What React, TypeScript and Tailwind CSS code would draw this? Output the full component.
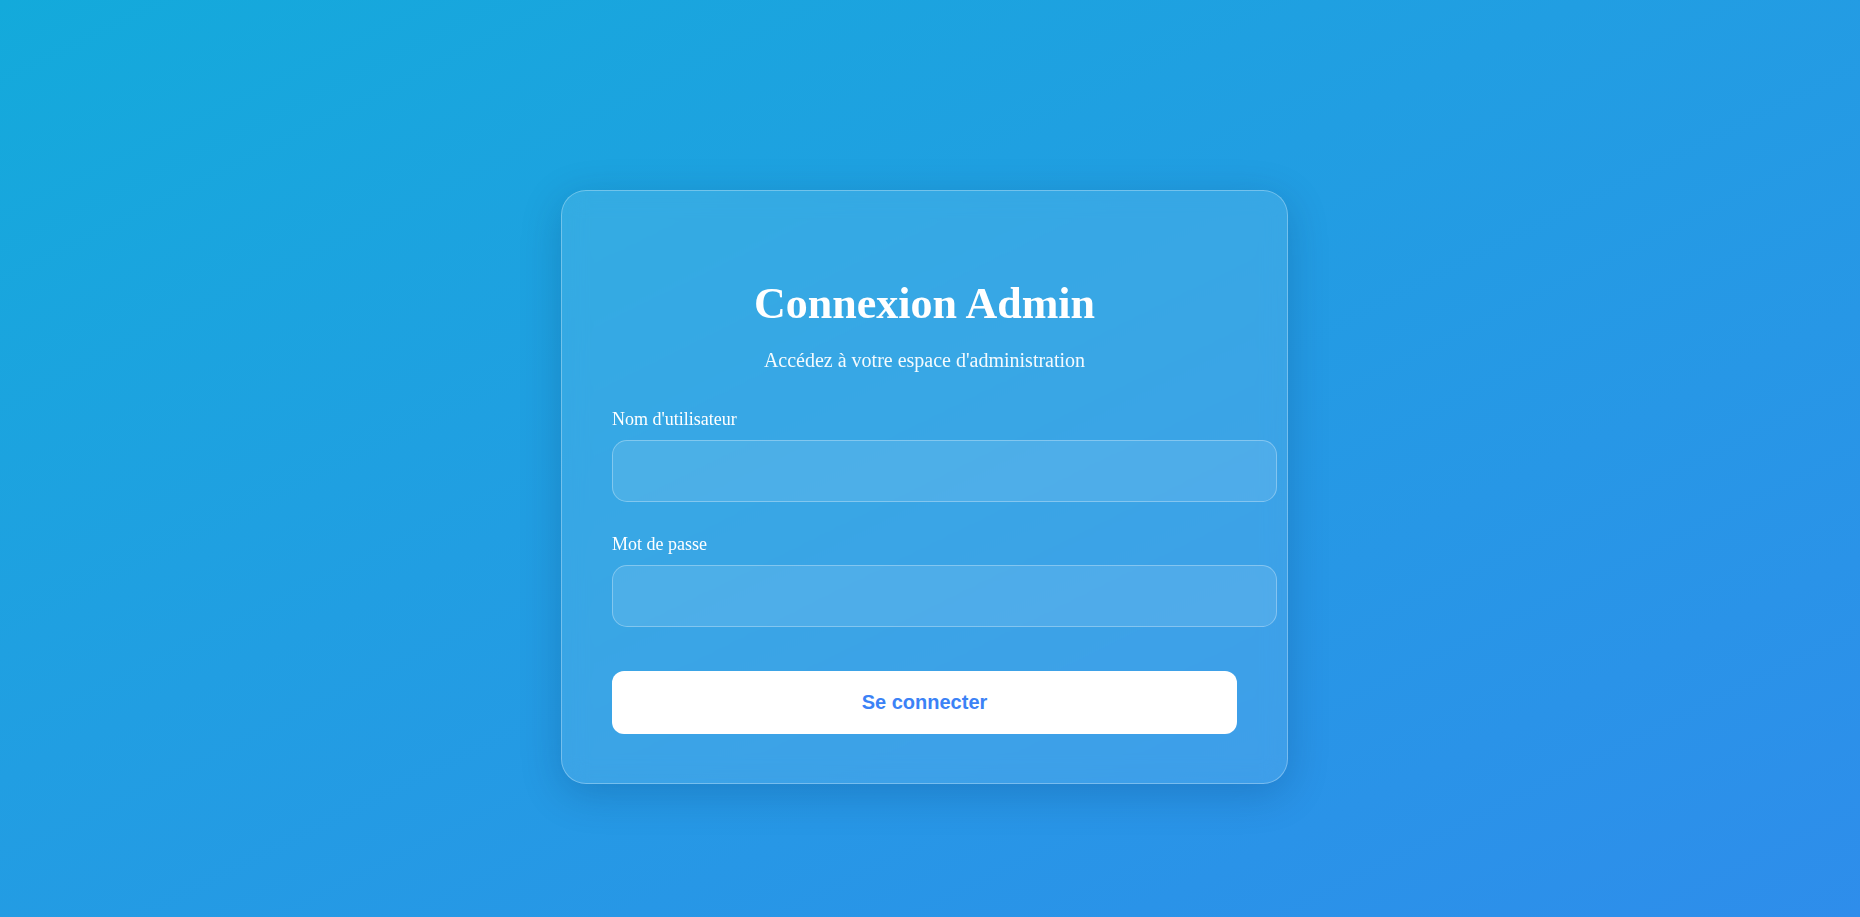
import { useState } from "react";

export default function App() {
  const [username, setUsername] = useState("");
  const [password, setPassword] = useState("");

  return (
    <div className="flex min-h-screen w-full justify-center bg-gradient-to-br from-[#13aadb] to-[#2e8deb] pt-[190px] pr-[11px] font-['Liberation_Serif',serif]">
      <div className="h-[594px] w-[727px] rounded-[25px] border border-white/30 bg-white/10 p-[50px] shadow-[0_10px_40px_rgba(0,40,90,0.22)] backdrop-blur-md">
        <div className="flex flex-col items-center pt-[36px] text-white">
          <h1 className="text-[44px] leading-[53px] font-bold">
            Connexion Admin
          </h1>
          <p className="mt-[19px] text-[20px] leading-[22px] text-white/95">
            Accédez à votre espace d'administration
          </p>
        </div>
        <form
          className="mt-[39px] flex flex-col"
          onSubmit={(e) => e.preventDefault()}
        >
          <label
            htmlFor="username"
            className="text-[18px] leading-[19px] text-white"
          >
            Nom d'utilisateur
          </label>
          <input
            id="username"
            value={username}
            onChange={(e) => setUsername(e.target.value)}
            className="mt-[11px] h-[62px] w-[665px] rounded-[15px] border border-white/30 bg-white/10 px-5 text-[17px] text-white outline-none"
          />
          <label
            htmlFor="password"
            className="mt-[33px] text-[18px] leading-[19px] text-white"
          >
            Mot de passe
          </label>
          <input
            id="password"
            type="password"
            value={password}
            onChange={(e) => setPassword(e.target.value)}
            className="mt-[11px] h-[62px] w-[665px] rounded-[15px] border border-white/30 bg-white/10 px-5 text-[17px] text-white outline-none"
          />
          <button
            type="submit"
            className="mt-[44px] h-[63px] w-full rounded-[12px] bg-white pb-[2px] font-['Liberation_Sans',Arial,sans-serif] text-[20px] font-bold text-[#3b82f6]"
          >
            Se connecter
          </button>
        </form>
      </div>
    </div>
  );
}
